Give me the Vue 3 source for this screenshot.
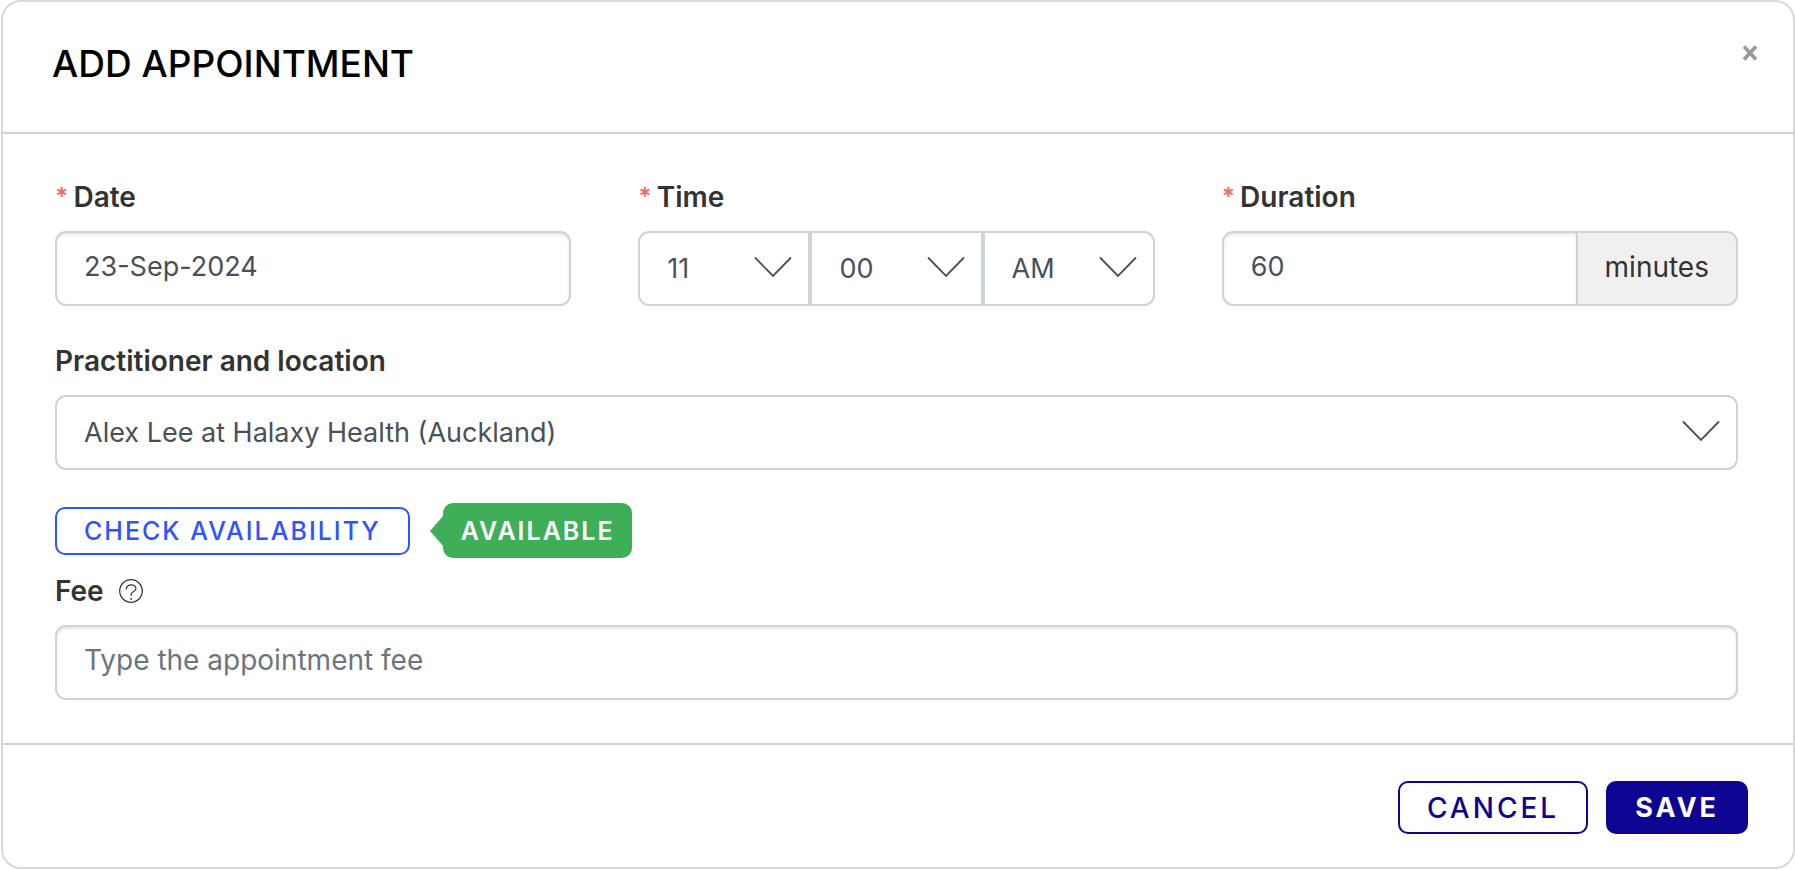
<script setup>
import { ref } from 'vue'

const date = ref('23-Sep-2024')
const duration = ref('60')
const fee = ref('')
const practitioner = ref('Alex Lee at Halaxy Health (Auckland)')

const timeParts = ref([
  { id: 'hour', label: 'Hour', value: '11', options: ['09', '10', '11', '12'] },
  { id: 'minute', label: 'Minute', value: '00', options: ['00', '15', '30', '45'] },
  { id: 'period', label: 'AM or PM', value: 'AM', options: ['AM', 'PM'] },
])
</script>

<template>
  <form class="modal" role="dialog" aria-labelledby="title" @submit.prevent>
    <header class="modal-header">
      <h1 id="title">ADD APPOINTMENT</h1>
      <button type="button" class="close" aria-label="Close">
        <svg viewBox="0 0 16 16" width="16" height="16" aria-hidden="true">
          <path d="M2 1.5 14 14.5M14 1.5 2 14.5" />
        </svg>
      </button>
    </header>

    <div class="modal-body">
      <div class="columns">
        <div class="field">
          <label for="date"><span class="required">*</span>Date</label>
          <input id="date" v-model="date" type="text" class="control" />
        </div>

        <div class="field" role="group" aria-labelledby="time-label">
          <label id="time-label" for="hour"><span class="required">*</span>Time</label>
          <div class="joined">
            <div v-for="part in timeParts" :key="part.id" class="select">
              <select :id="part.id" v-model="part.value" class="control" :aria-label="part.label">
                <option v-for="option in part.options" :key="option">{{ option }}</option>
              </select>
              <svg class="chevron" viewBox="0 0 38 22" aria-hidden="true"><path d="M1 1.500 19 20 37 1.500" /></svg>
            </div>
          </div>
        </div>

        <div class="field">
          <label for="duration"><span class="required">*</span>Duration</label>
          <div class="joined">
            <input id="duration" v-model="duration" type="text" class="control" />
            <span class="addon">minutes</span>
          </div>
        </div>
      </div>

      <div class="field practitioner">
        <label for="practitioner">Practitioner and location</label>
        <div class="select">
          <select id="practitioner" v-model="practitioner" class="control">
            <option>Alex Lee at Halaxy Health (Auckland)</option>
          </select>
          <svg class="chevron" viewBox="0 0 38 22" aria-hidden="true"><path d="M1 1.500 19 20 37 1.500" /></svg>
        </div>
      </div>

      <div class="availability">
        <button type="button" class="btn btn-check">CHECK AVAILABILITY</button>
        <output class="badge">AVAILABLE</output>
      </div>

      <div class="field">
        <label for="fee">
          Fee
          <svg class="help" viewBox="0 0 24 24" aria-hidden="true">
            <circle cx="12" cy="12" r="11.300" />
            <path d="M7.300 10.200C7 4.600 17.200 4.600 16.900 9.700 16.700 12.900 12.100 12.500 12.100 15.200V17M12.100 19V21" />
          </svg>
        </label>
        <input id="fee" v-model="fee" type="text" class="control" placeholder="Type the appointment fee" />
      </div>
    </div>

    <footer class="modal-footer">
      <button type="button" class="btn btn-cancel">CANCEL</button>
      <button type="submit" class="btn btn-save">SAVE</button>
    </footer>
  </form>
</template>

<style>
body {
  background: #fff;
}
</style>

<style scoped>
* {
  box-sizing: border-box;
}

.modal {
  margin-left: 1px;
  border: 2px solid #d8d8d8;
  border-radius: 20px;
  background: #fff;
  color: #333;
  font-family: Inter, "Liberation Sans", sans-serif;
  font-size: 28px;
  line-height: 36px;
}

.modal-header {
  display: flex;
  justify-content: space-between;
  align-items: flex-start;
  padding: 38px 35px 44px 49px;
  border-bottom: 2px solid #ced3da;
}

h1 {
  margin: 0;
  color: #000;
  font-size: 37px;
  font-weight: 500;
  line-height: 48px;
}

.close {
  display: flex;
  margin-top: 5px;
  padding: 0;
  border: 0;
  background: none;
}

.close path {
  fill: none;
  stroke: #999;
  stroke-width: 3.6;
}

.modal-body {
  padding: 45px 55px 43px 52px;
}

.columns {
  display: grid;
  grid-template-columns: repeat(3, minmax(0, 1fr));
  gap: 67px;
}

label {
  display: flex;
  align-items: center;
  margin-bottom: 16px;
  font-weight: 600;
}

.required {
  margin-right: 5px;
  color: #f26d63;
  font-size: 24px;
  font-weight: 700;
}

.control {
  display: block;
  width: 100%;
  min-width: 0;
  height: 75px;
  margin: 0;
  padding: 0 27px;
  border: 2px solid #ced3da;
  border-radius: 11px;
  background: #fff;
  color: #495057;
  font: inherit;
  font-size: 27px;
  appearance: none;
}

input.control {
  padding-bottom: 4px;
  box-shadow: inset 0 2px 3px rgba(0, 0, 0, 0.1);
}

.control::placeholder {
  color: #6c757d;
  font-size: 28px;
  opacity: 1;
}

.select {
  position: relative;
  flex: 1;
}

.chevron {
  position: absolute;
  top: 25px;
  right: 18px;
  width: 38px;
  height: 22px;
  fill: none;
  stroke: #495057;
  stroke-width: 1.8;
  pointer-events: none;
}

.joined {
  display: flex;
}

.joined > :not(:first-child),
.joined > :not(:first-child) .control {
  border-top-left-radius: 0;
  border-bottom-left-radius: 0;
}

.joined > :not(:last-child),
.joined > :not(:last-child) .control {
  border-top-right-radius: 0;
  border-bottom-right-radius: 0;
}

.addon {
  display: flex;
  align-items: center;
  padding: 0 27px 4px;
  border: 2px solid #ced3da;
  border-left: 0;
  border-radius: 11px;
  background: #f0f0f0;
}

.practitioner {
  margin-top: 37px;
}

.availability {
  display: flex;
  align-items: center;
  gap: 33px;
  margin: 33px 0 15px;
}

.btn {
  border: 2px solid;
  border-radius: 10px;
  font: inherit;
  line-height: 32px;
}

.btn-check {
  padding: 6px 27px;
  background: #fff;
  color: #2e54ff;
  font-size: 25px;
  font-weight: 500;
  letter-spacing: 2px;
}

.badge {
  position: relative;
  padding: 12px 17px 11px 18px;
  border-radius: 10px;
  background: #3fae58;
  color: #fff;
  font-size: 25px;
  font-weight: 600;
  line-height: 32px;
  letter-spacing: 2px;
}

.badge::before {
  content: "";
  position: absolute;
  top: 12px;
  left: -13px;
  border: solid transparent;
  border-width: 16px 14px 16px 0;
  border-right-color: #3fae58;
}

.help {
  width: 24px;
  height: 24px;
  margin-left: 15px;
  fill: none;
  stroke: #333;
  stroke-width: 1.2;
}

.modal-footer {
  display: flex;
  justify-content: flex-end;
  gap: 18px;
  padding: 36px 45px 33px;
  border-top: 2px solid #ced3da;
}

.modal-footer .btn {
  padding: 9px 27px 8px;
  letter-spacing: 3px;
}

.btn-cancel {
  background: #fff;
  color: #0d0491;
  font-weight: 500;
}

.modal-footer .btn-save {
  border-color: #0d0491;
  background: #0d0491;
  color: #fff;
  font-size: 27px;
  font-weight: 700;
}
</style>
